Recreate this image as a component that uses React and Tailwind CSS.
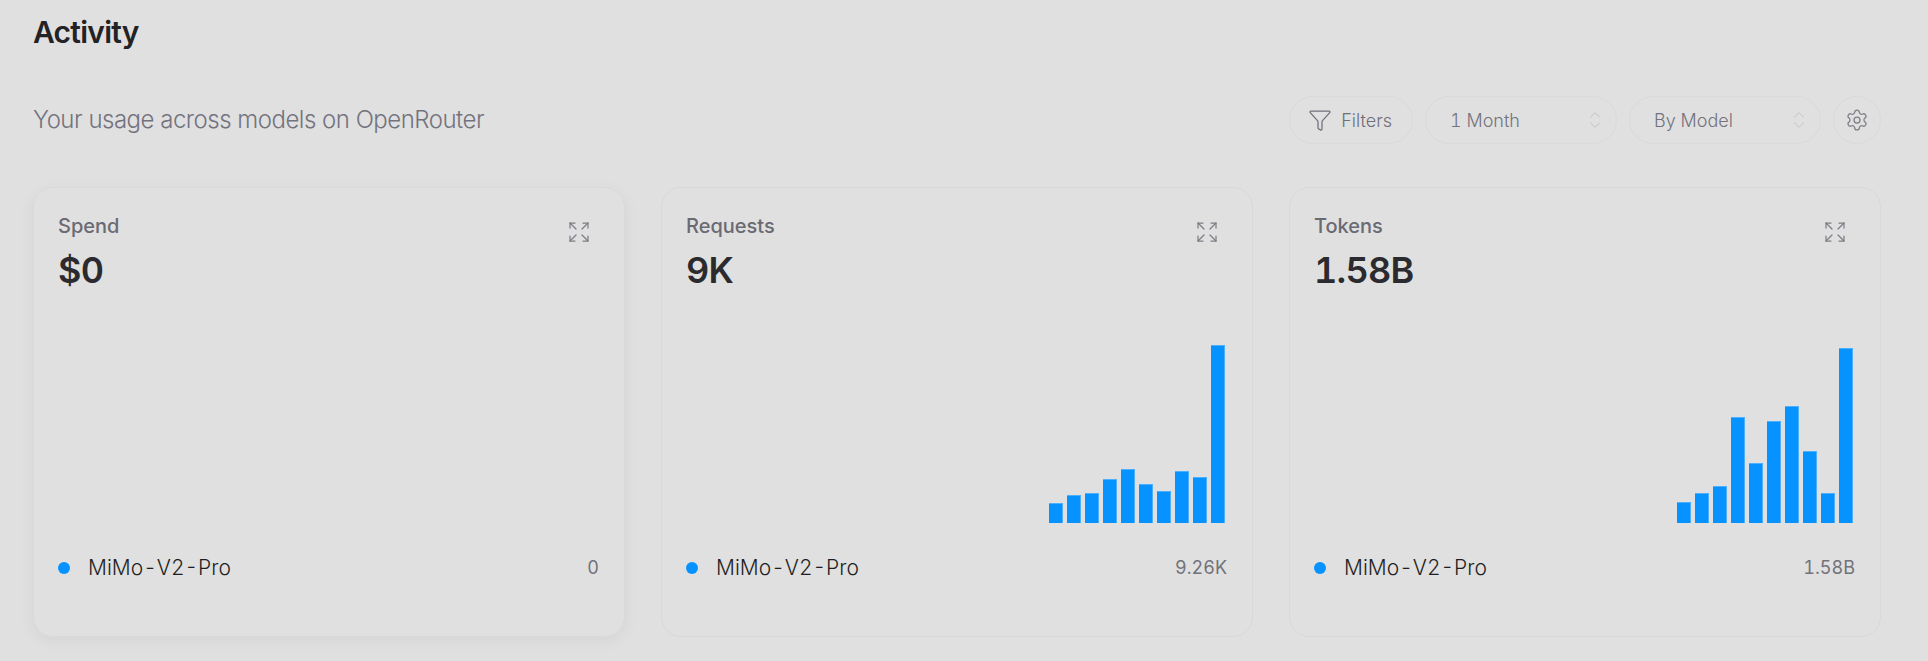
import React from "react";
import { ChevronsUpDown, Expand, Funnel, Settings } from "lucide-react";

const cards = [
  { title: "Spend", value: "$0", total: "0", bars: [] },
  {
    title: "Requests",
    value: "9K",
    total: "9.26K",
    bars: [20, 28, 30, 44, 54, 39, 32, 52, 46, 178],
  },
  {
    title: "Tokens",
    value: "1.58B",
    total: "1.58B",
    bars: [21, 30, 37, 106, 60, 102, 117, 72, 30, 175],
  },
];

const Select = ({ label }) => (
  <div className="flex h-12 w-[192px] items-center justify-between rounded-full border border-[#dadadc] pl-6 pr-2.5 text-[18px] font-light text-[#73737e] tabular-nums">
    <span>{label}</span>
    <ChevronsUpDown size={22} strokeWidth={1} className="text-[#c0c0c5]" />
  </div>
);

const Card = ({ card, active }) => (
  <div
    className={`flex h-[450px] flex-col rounded-[20px] border border-[#d9d9dd] pt-6 pr-[25px] pb-[56px] pl-6 ${active ? "shadow-[0_4px_16px_rgba(0,0,0,0.05)]" : ""}`}
  >
    <div className="flex items-start justify-between">
      <div>
        <div className="text-[20px] leading-7 font-medium text-[#6a6a73]">{card.title}</div>
        <div className="mt-[10px] text-4xl leading-10 font-semibold tracking-[-0.75px] text-[#2b2b2f] tabular-nums">
          {card.value}
        </div>
      </div>
      <Expand size={24} strokeWidth={1.25} className="mt-2 mr-2 text-[#7d7d86]" />
    </div>
    <div className="flex flex-1 items-end justify-end gap-1 pr-[2px]">
      {card.bars.map((h, i) => (
        <div
          key={i}
          className="w-[14px] border-t border-r border-[#4db0ff] bg-[#0693ff]"
          style={{ height: h }}
        />
      ))}
    </div>
    <div className="mt-[33px] flex items-center justify-between">
      <div className="flex items-center">
        <span className="h-3 w-3 rounded-full bg-[#0693ff]" />
        <span className="ml-[18px] text-[21px] leading-6 font-light text-[#1f1f23] tabular-nums">
          MiMo-V2-Pro
        </span>
      </div>
      <span className="text-[18px] leading-6 font-normal text-[#72727b] tabular-nums">{card.total}</span>
    </div>
  </div>
);

export default function App() {
  return (
    <div
      className="h-[661px] overflow-hidden bg-[#e0e0e0] pt-[14px] pr-[47px] pl-[33px]"
      style={{ fontFamily: "Inter, sans-serif" }}
    >
      <h1 className="text-[30px] leading-9 font-semibold tracking-[-0.75px] text-[#232326]">Activity</h1>
      <div className="mt-[46px] flex h-12 items-center justify-between">
        <p className="text-[24px] leading-8 font-light tracking-[-0.5px] text-[#73737e]">
          Your usage across models on OpenRouter
        </p>
        <div className="flex items-center gap-3">
          <div className="flex h-12 items-center gap-[9px] rounded-full border border-[#dadadc] pr-5 pl-[18px] text-[18px] font-light text-[#6f6f7a]">
            <Funnel size={24} strokeWidth={1.25} />
            <span>Filters</span>
          </div>
          <Select label="1 Month" />
          <Select label="By Model" />
          <div className="flex h-12 w-12 items-center justify-center rounded-full border border-[#dadadc] text-[#7d7d88]">
            <Settings size={24} strokeWidth={1.25} />
          </div>
        </div>
      </div>
      <div className="mt-[43px] grid grid-cols-3 gap-9">
        {cards.map((card, i) => (
          <Card key={card.title} card={card} active={i === 0} />
        ))}
      </div>
    </div>
  );
}
